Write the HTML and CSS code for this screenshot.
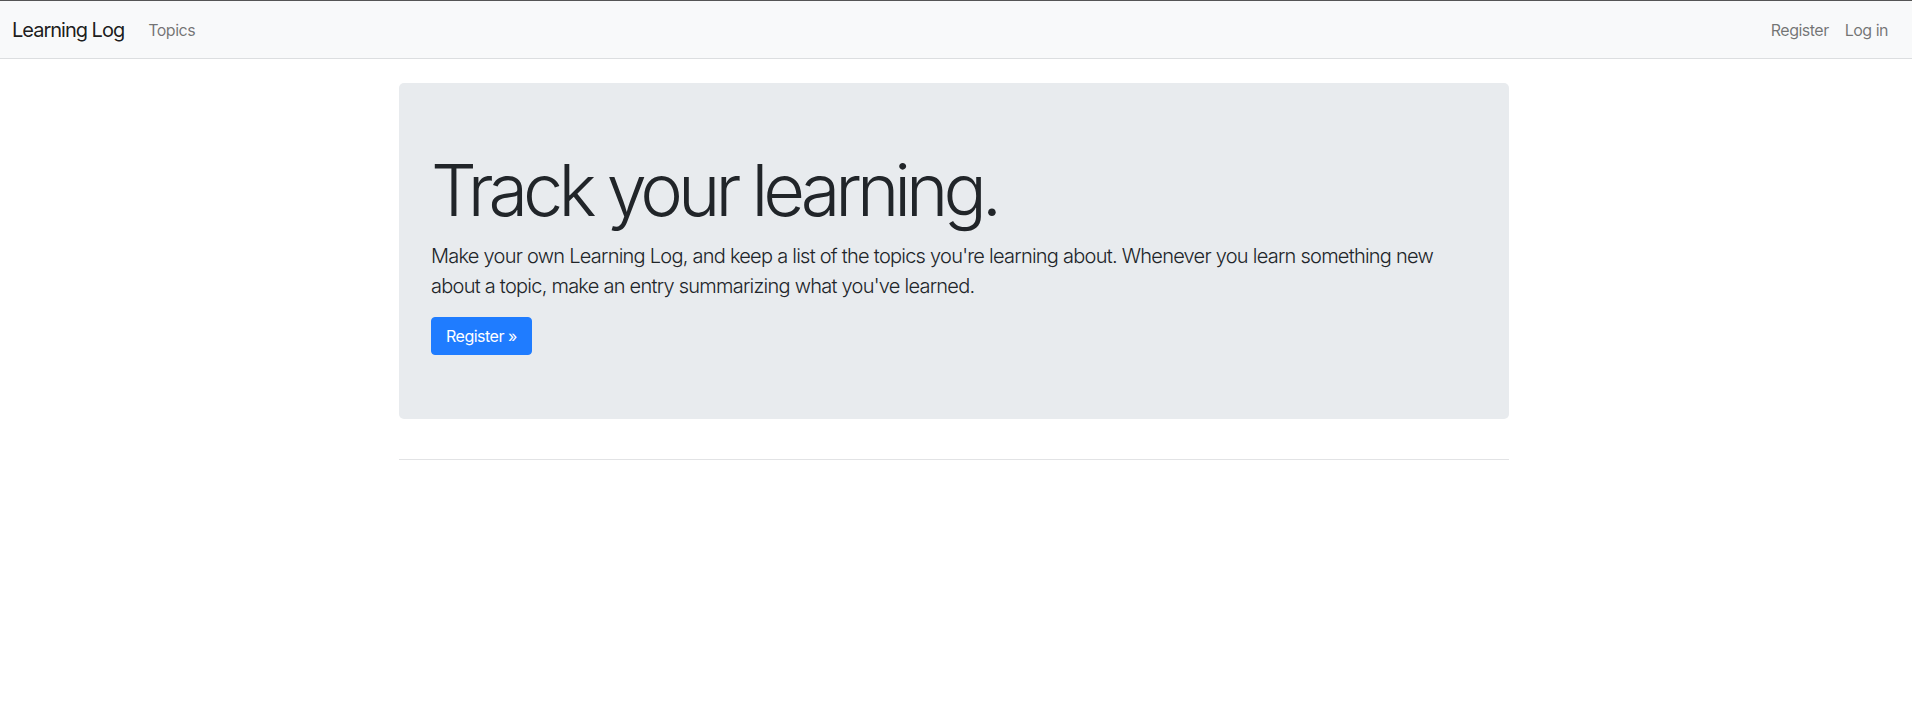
FILE: index.html
```html
<!DOCTYPE html>
<html lang="en">
<head>
    <meta charset="UTF-8">
    <meta name="viewport" content="width=device-width, initial-scale=1.0">
    <title>Learning Log</title>
    <link rel="stylesheet" href="styles.css">
</head>
<body>
    <nav class="navbar">
        <a class="navbar-brand" href="#">Learning Log</a>
        <ul class="navbar-nav">
            <li><a class="nav-link" href="#">Topics</a></li>
        </ul>
        <ul class="navbar-nav navbar-right">
            <li><a class="nav-link" href="#">Register</a></li>
            <li><a class="nav-link" href="#">Log in</a></li>
        </ul>
    </nav>

    <main class="container">
        <div class="jumbotron">
            <h1 class="display">Track your learning.</h1>
            <p class="lead">Make your own Learning Log, and keep a list of the topics you're learning about. Whenever you learn something new about a topic, make an entry summarizing what you've learned.</p>
            <a class="btn btn-primary" href="#">Register &raquo;</a>
        </div>
        <hr>
    </main>
</body>
</html>
```

FILE: styles.css
```css
/* Base */
body {
    margin: 0;
    font-family: Inter, "Noto Sans", sans-serif;
    font-size: 16px;
    line-height: 1.5;
    color: #212529;
    background-color: #fff;
}

a {
    text-decoration: none;
}

/* Navbar */
.navbar {
    display: flex;
    align-items: center;
    height: 57px;
    padding: 0 16px 0 12px;
    background-color: #f8f9fa;
    border-top: 1px solid #555;
    border-bottom: 1px solid #dcdee0;
}

.navbar-brand {
    font-size: 20px;
    line-height: 30px;
    letter-spacing: -1px;
    color: rgba(0, 0, 0, 0.9);
    margin-right: 16px;
}

.navbar-nav {
    display: flex;
    list-style: none;
    margin: 0;
    padding: 0;
}

.navbar-right {
    margin-left: auto;
}

.nav-link {
    display: block;
    padding: 8px;
    letter-spacing: -0.5px;
    color: rgba(0, 0, 0, 0.55);
}

/* Main container */
.container {
    width: 1110px;
    margin: 24px calc(50% - 553px) 0 calc(50% - 557px);
}

.jumbotron {
    background-color: #e8ebee;
    border-radius: 5px;
    padding: 64px 32px;
}

.display {
    font-size: 72px;
    font-weight: 300;
    line-height: 1.2;
    letter-spacing: -5px;
    margin: 0 0 8px;
}

.lead {
    font-size: 20px;
    font-weight: 300;
    line-height: 30px;
    letter-spacing: -0.75px;
    margin: 0 0 16px;
}

.btn {
    display: inline-block;
    padding: 6px 14px;
    font-size: 16px;
    line-height: 24px;
    letter-spacing: -0.5px;
    border-radius: 4px;
    border: 1px solid transparent;
}

.btn-primary {
    background-color: #1f7cff;
    border-color: #1f7cff;
    color: #fff;
}

hr {
    margin: 40px 0 16px;
    border: 0;
    border-top: 1px solid #e2e3e5;
}
```
